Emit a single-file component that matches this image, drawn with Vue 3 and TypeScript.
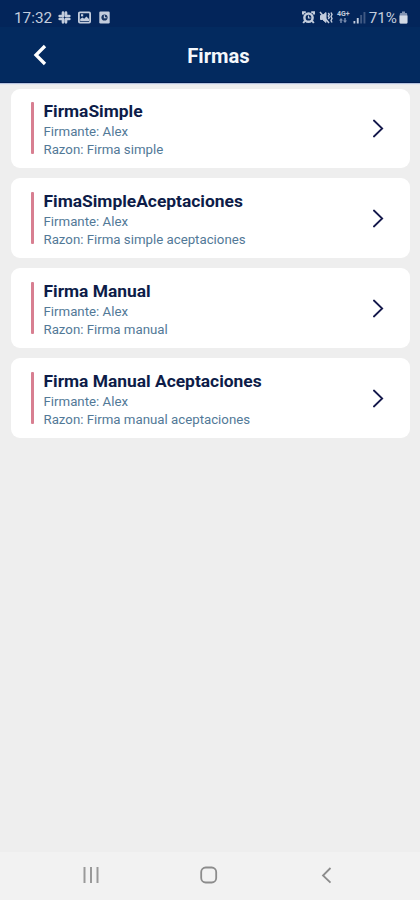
<script setup lang="ts">
interface Signature {
  title: string
  signer: string
  reason: string
}

const signatures: Signature[] = [
  { title: 'FirmaSimple', signer: 'Alex', reason: 'Firma simple' },
  { title: 'FimaSimpleAceptaciones', signer: 'Alex', reason: 'Firma simple aceptaciones' },
  { title: 'Firma Manual', signer: 'Alex', reason: 'Firma manual' },
  { title: 'Firma Manual Aceptaciones', signer: 'Alex', reason: 'Firma manual aceptaciones' },
]
</script>

<template>
  <div class="screen">
    <div class="status">
      <span class="clock">17:32</span>
      <svg class="slack" width="13" height="13" viewBox="0 0 13 13" fill="none" stroke="#c3cddd" stroke-width="2.7" stroke-linecap="round">
        <path d="M5 1.7v3.6M1.7 5h3.3M8 1.7V5M8 5h3.3M1.7 8H5M5 8v3.3M8 8h3.3M8 8v3.3" />
      </svg>
      <svg class="photo" width="13" height="13" viewBox="0 0 13 13">
        <rect x="0.9" y="1.4" width="11.2" height="10.2" rx="1" fill="none" stroke="#c3cddd" stroke-width="1.8" />
        <path d="M2.2 10V8l2.2-1.5 1.8 1.2 2.2-2.2L11 8v2z" fill="#c3cddd" />
        <path d="M3 3.2h2.2v2.2H3z" fill="#c3cddd" />
      </svg>
      <svg class="app" width="11" height="13" viewBox="0 0 11 13">
        <rect x="0.3" y="0.5" width="10.4" height="12" rx="1.2" fill="#c3cddd" />
        <circle cx="5.5" cy="6.5" r="3.1" fill="#193561" />
        <path d="M5.4 4.3v2.5h2.1" fill="none" stroke="#c3cddd" stroke-width="1.1" />
      </svg>
      <div class="system">
        <svg width="13" height="13" viewBox="0 0 13 13" fill="none" stroke="#c3cddd">
          <circle cx="6.5" cy="6.7" r="4.1" stroke-width="2.5" />
          <path d="M1 3.5V1.2h2.8M9.2 1.2H12v2.3M2.8 10l-1.6 2M10.2 10l1.6 2" stroke-width="2" />
          <path d="M6.5 4.5V7h2" stroke-width="1.2" />
        </svg>
        <svg class="mute" width="14" height="13" viewBox="0 0 14 13" fill="none" stroke="#c3cddd">
          <path d="M1.5 4.5h2L7 1.5v10l-3.5-3h-2z" fill="#c3cddd" />
          <path d="M1 1l9 11" stroke-width="1.5" />
          <path d="M9.3 2l1 1.5-1 1.5 1 1.5-1 1.5M12 1.5l1 2-1 2 1 2-1 2 1 2" stroke-width="1.4" />
        </svg>
        <div class="network">
          <span>4G+</span>
          <svg width="8" height="5" viewBox="0 0 8 5" fill="#7e90b0">
            <path d="M0 2.5L2 0l2 2.5H2.7V5H1.3V2.5zM4 2.5h1.3V0h1.4v2.5H8L6 5z" />
          </svg>
        </div>
        <svg class="signal" width="13" height="13" viewBox="0 0 13 13">
          <path d="M0.5 10h1.8v2.5H0.5zM3.8 7h1.9v5.5H3.8z" fill="#c3cddd" />
          <path d="M7.2 4h1.9v8.5H7.2zM10.5 1h1.9v11.5h-1.9z" fill="#405983" />
        </svg>
        <span class="percent">71%</span>
        <svg class="battery" width="9" height="13" viewBox="0 0 9 13">
          <path d="M3 0.5h3V2h1.2a1 1 0 0 1 1 1v8.5a1 1 0 0 1-1 1H1.8a1 1 0 0 1-1-1V3a1 1 0 0 1 1-1H3z" fill="#8293b1" />
          <path d="M0.5 4.5h8v7a1 1 0 0 1-1 1h-6a1 1 0 0 1-1-1z" fill="#d3dae5" />
        </svg>
      </div>
    </div>

    <header class="header">
      <svg class="back" width="16" height="24" viewBox="0 0 16 24" fill="none" stroke="#fff" stroke-width="3.3">
        <path d="M13 3L4 12l9 9" />
      </svg>
      <h1>Firmas</h1>
    </header>

    <main class="list">
      <article v-for="item in signatures" :key="item.title" class="card">
        <div class="accent"></div>
        <div class="info">
          <h2>{{ item.title }}</h2>
          <p>Firmante: {{ item.signer }}</p>
          <p>Razon: {{ item.reason }}</p>
        </div>
        <svg class="arrow" width="12" height="20" viewBox="0 0 12 20" fill="none" stroke="#14184b" stroke-width="1.8" stroke-linecap="round">
          <path d="M1.9 2.5l8.3 8-8.3 8" />
        </svg>
      </article>
    </main>

    <nav class="nav">
      <svg width="18" height="18" viewBox="0 0 18 18" fill="none" stroke="#999" stroke-width="2">
        <path d="M1.5 1v16M8 1v16M14.5 1v16" />
      </svg>
      <svg width="18" height="18" viewBox="0 0 18 18" fill="none" stroke="#8c8c8c" stroke-width="1.8">
        <rect x="1.2" y="1.5" width="15" height="15" rx="4.5" />
      </svg>
      <svg width="18" height="18" viewBox="0 0 18 18" fill="none" stroke="#8c8c8c" stroke-width="1.8">
        <path d="M13.5 2L6 9.5l7.5 7.2" />
      </svg>
    </nav>
  </div>
</template>

<style>
body {
  margin: 0;
}
</style>

<style scoped>
.screen {
  display: flex;
  flex-direction: column;
  width: 420px;
  height: 900px;
  background: #eee;
  font-family: Roboto, sans-serif;
  overflow: hidden;
}
.status {
  display: flex;
  align-items: center;
  box-sizing: border-box;
  height: 27px;
  padding: 7px 12px 0 14px;
  background: #03255a;
  color: #c3cddd;
}
.clock {
  width: 44px;
  padding-top: 1px;
  font-size: 15.3px;
  line-height: 20px;
}
.photo {
  margin-left: 7px;
}
.app {
  margin-left: 8px;
}
.system {
  display: flex;
  align-items: center;
  margin-left: auto;
}
.mute {
  margin-left: 4px;
}
.network {
  display: flex;
  flex-direction: column;
  align-items: center;
  width: 13px;
  margin-left: 4px;
}
.network span {
  font-size: 7px;
  font-weight: 700;
  line-height: 7px;
}
.signal {
  margin-left: 3px;
}
.percent {
  margin-left: 3px;
  padding-top: 1px;
  font-size: 15.2px;
  line-height: 20px;
}
.battery {
  margin-left: 2px;
}
.header {
  display: grid;
  grid-template-columns: 1fr auto 1fr;
  align-items: center;
  box-sizing: border-box;
  height: 56px;
  padding: 0 15px 0 32px;
  background: #032a5f;
  border-bottom: 1px solid #001c50;
  box-shadow: 0 1px 1px #b5c3df;
}
.header h1 {
  margin: 2px 0 0;
  color: #f5f8fc;
  font-size: 20.2px;
  font-weight: 700;
  line-height: 26px;
}
.list {
  display: flex;
  flex: 1;
  flex-direction: column;
  gap: 10px;
  padding: 5.5px 10px 0 10.5px;
}
.card {
  display: flex;
  align-items: center;
  box-sizing: border-box;
  height: 79.8px;
  padding: 0 26px 0 20px;
  background: #fff;
  border-radius: 9px;
}
.accent {
  width: 3px;
  height: 52px;
  background: #d87f91;
  border-radius: 1px;
}
.info {
  flex: 1;
  padding-top: 4px;
  margin-left: 10px;
}
.info h2 {
  margin: 0 0 1px;
  color: #0d1c48;
  font-size: 17.4px;
  font-weight: 700;
  line-height: 21px;
}
.info p {
  margin: 0;
  color: #527997;
  font-size: 13.25px;
  line-height: 18px;
}
.nav {
  display: flex;
  align-items: center;
  justify-content: space-between;
  box-sizing: border-box;
  height: 48px;
  padding: 0 85px 2px 83px;
  background: #f2f2f2;
}
</style>
